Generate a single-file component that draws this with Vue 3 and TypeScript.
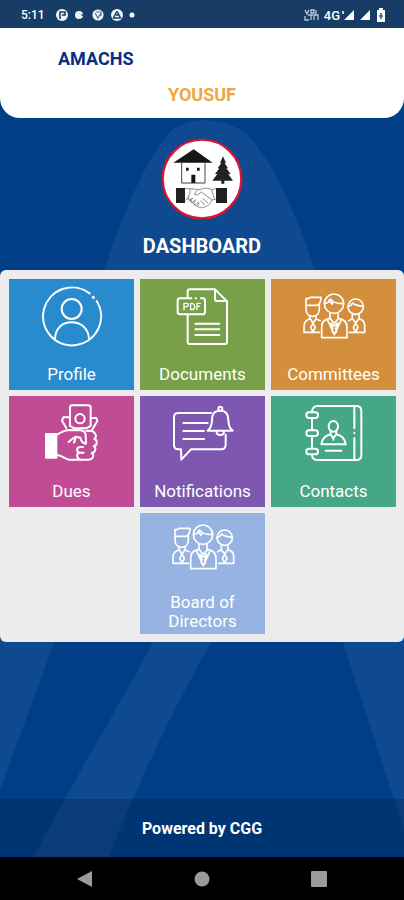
<script setup lang="ts">
interface Tile {
  id: string
  label: string
  icon: 'profile' | 'documents' | 'people' | 'dues' | 'notifications' | 'contacts'
  viewBox: string
}

const tiles: Tile[] = [
  { id: 'profile', label: 'Profile', icon: 'profile', viewBox: '106 51 216 195' },
  { id: 'documents', label: 'Documents', icon: 'documents', viewBox: '97 51 216 195' },
  { id: 'committees', label: 'Committees', icon: 'people', viewBox: '95 51 216 195' },
  { id: 'dues', label: 'Dues', icon: 'dues', viewBox: '106 27 216 195' },
  { id: 'notifications', label: 'Notifications', icon: 'notifications', viewBox: '97 27 216 195' },
  { id: 'contacts', label: 'Contacts', icon: 'contacts', viewBox: '95 27 216 195' },
  { id: 'board', label: 'Board of Directors', icon: 'people', viewBox: '95 51 216 195' },
]
</script>

<template>
  <div class="screen">
    <svg class="backdrop" viewBox="0 0 404 900" preserveAspectRatio="none" aria-hidden="true">
      <g fill="#0f4a90">
        <path d="M105 267C126 208 146 158 170 132C188 116 224 116 246 134C272 158 294 210 314 267V400H105z" />
        <path d="M0 500H100L55 640L0 790z" />
        <path d="M300 500H404V830L342 640z" />
        <path d="M230 500H300L212 640C165 725 135 790 109 857H34C70 785 115 715 154 640z" />
      </g>
    </svg>

    <div class="status">
      <span class="clock">5:11</span>
      <svg class="status-left" viewBox="0 0 84 14" aria-hidden="true">
        <circle cx="8" cy="7" r="6" fill="#eef5fa" />
        <path d="M6 11V4h5v3H8" fill="none" stroke="#173c66" stroke-width="1.6" />
        <circle cx="25" cy="7" r="4" fill="#eef5fa" />
        <path d="M27 7h3" stroke="#173c66" stroke-width="1.2" />
        <circle cx="44" cy="7" r="5.6" fill="#eef5fa" />
        <path d="M41 5l3 5 3-5M42 4h5v4" fill="none" stroke="#52718e" stroke-width="1.2" />
        <circle cx="63" cy="7" r="6" fill="#eef5fa" />
        <path d="M59.500 10l3-6h1l3 6zM62 7h3" fill="none" stroke="#173c66" stroke-width="1.4" />
        <circle cx="78" cy="7" r="2.500" fill="#fff" />
      </svg>
      <svg class="volte" viewBox="0 0 16 14" aria-hidden="true">
        <path d="M1 2l2 4 2-4M7 2h3v3H7zM12 2v5M1 8v4h4M4 7h5M7 7v5M10 12V7h4v5" fill="none" stroke="#b9cad8" stroke-width="1.3" />
      </svg>
      <span class="network">4G</span>
      <svg class="status-right" viewBox="0 0 44 16" aria-hidden="true">
        <path d="M2 13L12 3v10zM18 13L28 3v10z" fill="#fff" />
        <path d="M1 4v3" stroke="#fff" stroke-width="1.500" />
        <path d="M37 1h4v2h2v12h-8V3h2z" fill="#fff" />
        <path d="M39 6v6M37 9h4" stroke="#3b5878" stroke-width="1.500" />
      </svg>
    </div>

    <header class="header">
      <div class="brand">AMACHS</div>
      <div class="user">YOUSUF</div>
    </header>

    <main class="main">
      <svg class="logo" viewBox="0 0 246 246" role="img" aria-label="AMACHS logo">
        <circle cx="123" cy="123" r="118" fill="#fff" stroke="#d8152f" stroke-width="7" />
        <path d="M37 74L98 34l57 40z" fill="#171717" />
        <path d="M62 74v61h70V74" fill="none" stroke="#444" stroke-width="3" />
        <path d="M62 135h70" fill="none" stroke="#999" stroke-width="3" />
        <path d="M91 110h12v25H91zM75 89h8v9h-8zM108 89h8v9h-8z" fill="#171717" />
        <path d="M186 55l-9 20h4l-11 16h5l-13 17h7l-15 20h27v9h9v-9h26l-14-20h7l-13-17h5l-10-16h4z" fill="#222" />
        <path d="M45 150h27v45H45zM165 150h33v45h-33z" fill="#202020" />
        <g fill="none" stroke="#777" stroke-width="2.500" stroke-linejoin="round">
          <path d="M73 151l15 2c-1 14-5 21-9 29l-6 5M164 152l-12 3c-10-6-24-6-35 0l-29-3M152 155c4 13 4 21 11 29l-10 2" />
          <path d="M83 182l22 21c7 6 15 8 22 5 12-2 24-11 25-23l-31-23-12 9-9-2 10-14" />
          <path d="M86 176l-6 8 5 3 9-7M95 180l-7 11 5 3 10-9M105 187l-8 11 6 3 10-9M114 193l-4 11M125 181l16 14M119 187l12 15" />
        </g>
      </svg>
      <h1 class="title">DASHBOARD</h1>

      <div class="panel">
        <button
          v-for="tile in tiles"
          :key="tile.id"
          type="button"
          class="tile"
          :class="`tile-${tile.id}`"
        >
          <svg class="icon" :viewBox="tile.viewBox" aria-hidden="true">
            <g v-if="tile.icon === 'profile'">
              <path d="M267 85A87 87 0 1 0 288 108" />
              <circle cx="278" cy="97" r="2" />
              <circle cx="213" cy="132" r="30" />
              <path d="M163 220c2-33 24-48 50-48s49 16 52 48" />
            </g>
            <g v-else-if="tile.icon === 'documents'">
              <path d="M159 96V80q0-7 7-7h75l36 36v121q0 7-7 7H166q-7 0-7-7v-79M241 73v28q0 7 7 7h29" />
              <path d="M170 100h-34q-7 0-7 7v34q0 7 7 7h68q7 0 7-7v-34q0-7-7-7h-5M183 100h1" />
              <path d="M182 176h72M182 193h72M182 210h72" />
              <path class="fine" d="M148 134v-19h8q5 0 5 5t-5 5h-8M168 115v19h4q8 0 8-9t-8-10zM187 134v-19h10M187 124h8" />
            </g>
            <g v-else-if="tile.icon === 'people'" class="thin">
              <path d="M119 110v23c0 12 8 21 20 21s20-9 20-21v-15M119 121h34q11-6 11-24h-32l-7 4h-6v20M130 152v9M149 152v9" />
              <path d="M160 202h-47v-18c0-15 9-20 19-22l8 12 9-12 13 5M140 174l-7 14 7 12 7-12z" />
              <circle cx="203" cy="116" r="29" />
              <path d="M175 116q13-2 18-14 6 13 36 14M188 105l9 13 3-10M191 144v15M215 144v15" />
              <path d="M166 218v-31c0-18 11-25 25-27l13 15 13-15c17 3 25 11 25 27v31zM183 164l21 45 21-45M194 174l10 9 10-9-6 17 3 8-7 9-7-9 3-8z" />
              <circle cx="268" cy="125" r="23" />
              <path d="M245 124q9 0 13-10 10 8 33 10M258 146v13M278 146v13" />
              <path d="M247 167l11-6 10 12 10-12c11 3 17 9 17 21v20h-46M268 174l-7 14 7 12 7-12z" />
            </g>
            <g v-else-if="tile.icon === 'dues'">
              <path d="M136 132h31v71h-31z" fill="#fff" />
              <path d="M168 135c18-13 27-15 41-15l31 1c12 1 15 7 15 16l1 24q-13-1-17-18l-13-3c-9 4-15 10-22 16M226 140l-6 18" />
              <path d="M168 195c19 1 24 14 37 14h57c17 0 19-16 11-20 13-2 14-17 6-20 13-3 11-20 2-22 10-7 2-22-8-24l-16-1M247 171h-8c-13 0-12 16-2 17h12M238 188c-13 1-11 20 4 21" />
              <path d="M208 107V53q0-7 7-7h47q8 0 8 7v54M205 82h-17l-4 10 13 22M273 84h14l3 9-16 27M207 107l14 8h35l14-7" />
              <circle cx="238" cy="86" r="14" />
            </g>
            <g v-else-if="tile.icon === 'notifications'">
              <path d="M229 69h-98q-13 0-13 13v83q0 13 13 13h8l1 31 29-31h90q14 0 14-14v-30M146 99h73M146 123h62M146 147h62" />
              <path d="M219 122c15-9 12-28 14-43 2-11 10-17 24-17s22 8 23 20c2 19 2 32 14 40zM246 126c0 12 22 12 22 0" />
              <circle cx="257" cy="56" r="6" />
            </g>
            <g v-else>
              <path d="M137 66q1-18 17-18h116q15 0 15 15v132q0 15-15 15H154q-16 0-17-15M137 88v30M137 141v32M264 50v65M264 128v2M264 144v65" />
              <rect x="120" y="67" width="35" height="17" rx="8" />
              <rect x="120" y="121" width="35" height="17" rx="8" />
              <rect x="120" y="176" width="35" height="17" rx="8" />
              <ellipse cx="201" cy="109" rx="14" ry="16" />
              <path d="M193 124v9c-16 4-26 12-28 30h73c-2-18-12-26-28-30v-9M192 133l9 11 9-11M201 144v5M178 182h47" />
            </g>
          </svg>
          <span class="label">{{ tile.label }}</span>
        </button>
      </div>
    </main>

    <footer class="footer">Powered by CGG</footer>

    <nav class="nav" aria-label="System navigation">
      <button type="button" aria-label="Back">
        <svg viewBox="0 0 18 18"><path d="M1 9L16 1v16z" /></svg>
      </button>
      <button type="button" aria-label="Home">
        <svg viewBox="0 0 18 18"><circle cx="9" cy="9" r="7.500" /></svg>
      </button>
      <button type="button" aria-label="Recent apps">
        <svg viewBox="0 0 18 18"><rect x="1" y="1" width="16" height="16" rx="1" /></svg>
      </button>
    </nav>
  </div>
</template>

<style>
body {
  background: #003f88;
}
</style>

<style scoped>
.screen {
  position: relative;
  isolation: isolate;
  display: flex;
  flex-direction: column;
  min-height: 100vh;
  background: #003f88;
  color: #fff;
  font-family: Roboto, "Liberation Sans", sans-serif;
}
.backdrop {
  position: absolute;
  inset: 0;
  z-index: -1;
  width: 100%;
  height: 100%;
}
.status {
  display: flex;
  align-items: center;
  height: 28px;
  padding: 2px 18px 0 21px;
  box-sizing: border-box;
  background: #173c66;
  font-size: 12px;
  font-weight: 500;
}
.clock {
  width: 33px;
}
.status-left {
  width: 84px;
  height: 14px;
}
.volte {
  width: 16px;
  height: 14px;
  margin-left: auto;
}
.network {
  margin: 0 2px 0 4px;
  font-size: 13px;
}
.status-right {
  width: 44px;
  height: 16px;
}
.header {
  height: 90px;
  box-sizing: border-box;
  padding-top: 19px;
  border-radius: 0 0 20px 20px;
  background: #fff;
  font-size: 18px;
  line-height: 24px;
  font-weight: 700;
}
.brand {
  padding-left: 58px;
  color: #092f7e;
}
.user {
  margin-top: 12px;
  text-align: center;
  color: #f0a640;
}
.main {
  flex: 1;
  display: flex;
  flex-direction: column;
  align-items: center;
  padding-top: 20px;
}
.logo {
  width: 82px;
  height: 82px;
}
.title {
  margin: 14px 0 12px;
  font-size: 20px;
  line-height: 24px;
  font-weight: 700;
}
.panel {
  display: grid;
  grid-template-columns: repeat(3, minmax(0, 1fr));
  gap: 6px;
  width: 100%;
  box-sizing: border-box;
  padding: 9px 8px 8px 9px;
  border-radius: 6px;
  background: #ececec;
}
.tile {
  display: flex;
  flex-direction: column;
  align-items: center;
  gap: 18px;
  min-height: 111px;
  padding: 3px 8px 6px;
  border: 0;
  color: #fff;
  font-family: inherit;
  font-size: 17px;
  line-height: 19px;
  cursor: pointer;
}
.tile-profile { background: #288bce; }
.tile-documents { background: #78a048; }
.tile-committees { background: #d38f3b; }
.tile-dues { background: #c14c96; }
.tile-notifications { background: #7e58b0; }
.tile-contacts { background: #46a788; }
.tile-board {
  grid-column: 2;
  gap: 15px;
  padding: 0 24px 3px;
  background: #96b3e1;
}
.icon {
  flex: none;
  width: 72px;
  height: 65px;
  fill: none;
  stroke: #fff;
  stroke-width: 6;
  stroke-linecap: round;
  stroke-linejoin: round;
}
.thin {
  stroke-width: 5;
}
.fine {
  stroke-width: 4;
}
.footer {
  height: 58px;
  background: rgb(0 30 70 / 30%);
  font-size: 16px;
  line-height: 60px;
  font-weight: 700;
  text-align: center;
}
.nav {
  display: flex;
  justify-content: space-around;
  align-items: center;
  height: 43px;
  padding: 0 27px;
  background: #000;
}
.nav button {
  display: flex;
  padding: 6px;
  border: 0;
  background: none;
  cursor: pointer;
}
.nav svg {
  width: 18px;
  height: 18px;
  fill: #9b9b9b;
}
</style>
